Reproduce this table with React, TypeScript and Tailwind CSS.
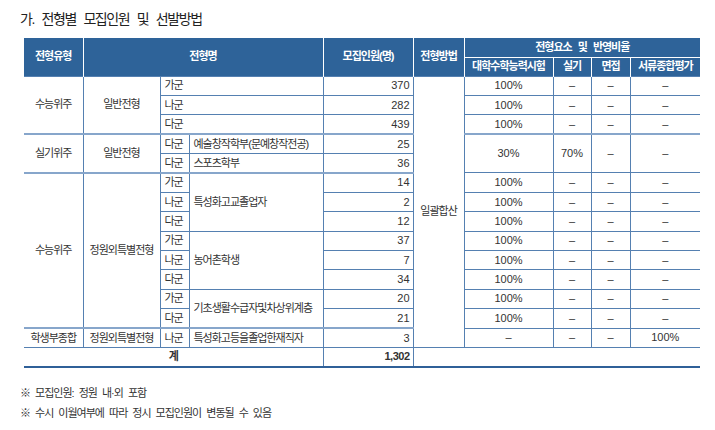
import React from 'react'

const cell = 'border border-[#5580b1] text-[#333] align-middle p-0'
const ko = 'text-[11px] tracking-[-1px] leading-none'
const num = 'text-[11px] leading-none text-right pr-[3px]'
const mid = 'text-[11px] leading-none text-center'
const grp = 'border-t-2 border-t-[#87a6cb]'
const th = 'bg-[#2e6399] text-white font-bold text-[11px] tracking-[-1px] leading-none border-x border-white p-0'

// one row of 100% / – / – / –
function Ratio({ first = '100%', last = '–' }: { first?: string; last?: string }) {
  return (
    <>
      <td className={`${cell} ${mid}`}>{first}</td>
      <td className={`${cell} ${mid}`}>–</td>
      <td className={`${cell} ${mid}`}>–</td>
      <td className={`${cell} ${mid} border-r-0`}>{last}</td>
    </>
  )
}

export default function App() {
  return (
    <div className="w-[715px] h-[430px] bg-white font-['Liberation_Sans','Noto_Sans_CJK_KR',sans-serif] text-[#333]">
      <h2 className="pt-[10px] pl-[20px] text-[14px] leading-[18px] tracking-[-1.4px] [word-spacing:5px] text-[#222] font-normal">
        가. 전형별 모집인원 및 선발방법
      </h2>

      <table className="mt-[10px] ml-[24px] w-[676px] table-fixed border-collapse">
        <colgroup>
          <col className="w-[59px]" />
          <col className="w-[77px]" />
          <col className="w-[29px]" />
          <col className="w-[134px]" />
          <col className="w-[90px]" />
          <col className="w-[51px]" />
          <col className="w-[89px]" />
          <col className="w-[38px]" />
          <col className="w-[39px]" />
          <col className="w-[70px]" />
        </colgroup>
        <thead>
          <tr className="h-[19px]">
            <th rowSpan={2} className={`${th} border-l-0`}>전형유형</th>
            <th rowSpan={2} colSpan={3} className={th}>전형명</th>
            <th rowSpan={2} className={th}>모집인원(명)</th>
            <th rowSpan={2} className={th}>전형방법</th>
            <th colSpan={4} className={`${th} border-r-0 border-b [word-spacing:4px]`}>전형요소 및 반영비율</th>
          </tr>
          <tr className="h-[19px]">
            <th className={th}>대학수학능력시험</th>
            <th className={th}>실기</th>
            <th className={th}>면접</th>
            <th className={`${th} border-r-0`}>서류종합평가</th>
          </tr>
        </thead>
        <tbody>
          {/* 수능위주 일반전형 */}
          <tr className="h-[19.4px]">
            <td rowSpan={3} className={`${cell} ${ko} text-center border-l-0`}>수능위주</td>
            <td rowSpan={3} className={`${cell} ${ko} text-center`}>일반전형</td>
            <td colSpan={2} className={`${cell} ${ko} pl-[4px]`}>가군</td>
            <td className={`${cell} ${num}`}>370</td>
            <td rowSpan={14} className={`${cell} ${ko} text-center`}>일괄합산</td>
            <Ratio />
          </tr>
          <tr className="h-[19.4px]">
            <td colSpan={2} className={`${cell} ${ko} pl-[4px]`}>나군</td>
            <td className={`${cell} ${num}`}>282</td>
            <Ratio />
          </tr>
          <tr className="h-[19.4px]">
            <td colSpan={2} className={`${cell} ${ko} pl-[4px]`}>다군</td>
            <td className={`${cell} ${num}`}>439</td>
            <Ratio />
          </tr>

          {/* 실기위주 */}
          <tr className="h-[19.4px]">
            <td rowSpan={2} className={`${cell} ${ko} ${grp} text-center border-l-0`}>실기위주</td>
            <td rowSpan={2} className={`${cell} ${ko} ${grp} text-center`}>일반전형</td>
            <td className={`${cell} ${ko} ${grp} pl-[4px]`}>다군</td>
            <td className={`${cell} ${ko} ${grp} pl-[4px]`}>예술창작학부(문예창작전공)</td>
            <td className={`${cell} ${num} ${grp}`}>25</td>
            <td rowSpan={2} className={`${cell} ${mid} ${grp}`}>30%</td>
            <td rowSpan={2} className={`${cell} ${mid} ${grp}`}>70%</td>
            <td rowSpan={2} className={`${cell} ${mid} ${grp}`}>–</td>
            <td rowSpan={2} className={`${cell} ${mid} ${grp} border-r-0`}>–</td>
          </tr>
          <tr className="h-[19.4px]">
            <td className={`${cell} ${ko} pl-[4px]`}>다군</td>
            <td className={`${cell} ${ko} pl-[4px]`}>스포츠학부</td>
            <td className={`${cell} ${num}`}>36</td>
          </tr>

          {/* 수능위주 정원외특별전형 */}
          <tr className="h-[19.4px]">
            <td rowSpan={8} className={`${cell} ${ko} ${grp} text-center border-l-0`}>수능위주</td>
            <td rowSpan={8} className={`${cell} ${ko} ${grp} text-center`}>정원외특별전형</td>
            <td className={`${cell} ${ko} ${grp} pl-[4px]`}>가군</td>
            <td rowSpan={3} className={`${cell} ${ko} ${grp} pl-[4px]`}>특성화고교졸업자</td>
            <td className={`${cell} ${num} ${grp}`}>14</td>
            <Ratio />
          </tr>
          <tr className="h-[19.4px]">
            <td className={`${cell} ${ko} pl-[4px]`}>나군</td>
            <td className={`${cell} ${num}`}>2</td>
            <Ratio />
          </tr>
          <tr className="h-[19.4px]">
            <td className={`${cell} ${ko} pl-[4px]`}>다군</td>
            <td className={`${cell} ${num}`}>12</td>
            <Ratio />
          </tr>
          <tr className="h-[19.4px]">
            <td className={`${cell} ${ko} pl-[4px]`}>가군</td>
            <td rowSpan={3} className={`${cell} ${ko} pl-[4px]`}>농어촌학생</td>
            <td className={`${cell} ${num}`}>37</td>
            <Ratio />
          </tr>
          <tr className="h-[19.4px]">
            <td className={`${cell} ${ko} pl-[4px]`}>나군</td>
            <td className={`${cell} ${num}`}>7</td>
            <Ratio />
          </tr>
          <tr className="h-[19.4px]">
            <td className={`${cell} ${ko} pl-[4px]`}>다군</td>
            <td className={`${cell} ${num}`}>34</td>
            <Ratio />
          </tr>
          <tr className="h-[19.4px]">
            <td className={`${cell} ${ko} pl-[4px]`}>가군</td>
            <td rowSpan={2} className={`${cell} ${ko} pl-[4px]`}>기초생활수급자및차상위계층</td>
            <td className={`${cell} ${num}`}>20</td>
            <Ratio />
          </tr>
          <tr className="h-[19.4px]">
            <td className={`${cell} ${ko} pl-[4px]`}>다군</td>
            <td className={`${cell} ${num}`}>21</td>
            <Ratio />
          </tr>

          {/* 학생부종합 */}
          <tr className="h-[19.4px]">
            <td className={`${cell} ${ko} ${grp} text-center border-l-0`}>학생부종합</td>
            <td className={`${cell} ${ko} ${grp} text-center`}>정원외특별전형</td>
            <td className={`${cell} ${ko} ${grp} pl-[4px]`}>나군</td>
            <td className={`${cell} ${ko} ${grp} pl-[4px]`}>특성화고등을졸업한재직자</td>
            <td className={`${cell} ${num} ${grp}`}>3</td>
            <Ratio first="–" last="100%" />
          </tr>

          {/* 계 */}
          <tr className="h-[19.4px]">
            <td colSpan={4} className={`${cell} ${ko} font-bold text-center border-l-0 border-b-2 border-b-[#2f6098]`}>계</td>
            <td className={`${cell} ${num} font-bold tracking-[-0.5px] border-b-2 border-b-[#2f6098]`}>1,302</td>
            <td colSpan={5} className={`${cell} border-r-0 border-b-2 border-b-[#2f6098]`} />
          </tr>
        </tbody>
      </table>

      <div className="mt-[15px] pl-[20px] text-[11px] leading-[20px] tracking-[-1px] [word-spacing:3px] text-[#333]">
        <p>※ 모집인원: 정원 내·외 포함</p>
        <p>※ 수시 이월여부에 따라 정시 모집인원이 변동될 수 있음</p>
      </div>
    </div>
  )
}
